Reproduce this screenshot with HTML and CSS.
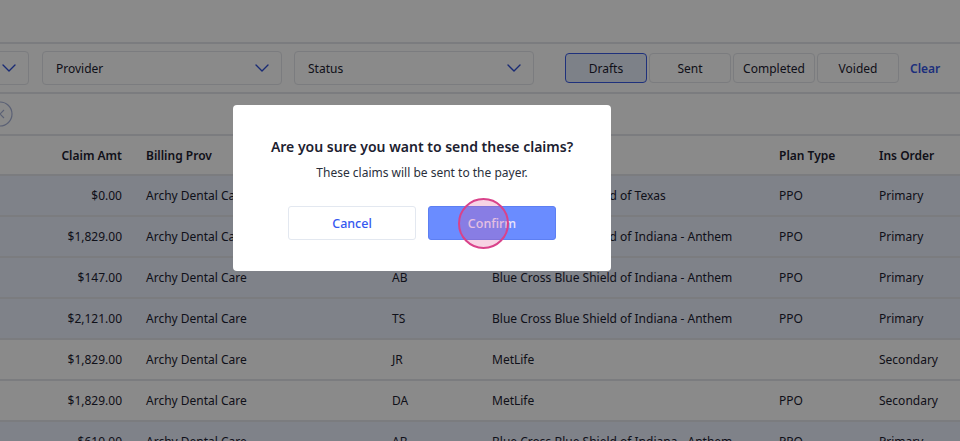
FILE: index.html
```html
<!DOCTYPE html>
<html lang="en">
<head>
<meta charset="utf-8">
<title>Claims</title>
<link rel="stylesheet" href="styles.css">
</head>
<body>
<div class="page">
  <div class="topbar"></div>

  <div class="filters">
    <div class="select select-cut">
      <span class="select-label"></span>
      <svg class="chevron" viewBox="0 0 14 8"><path d="M1 1l6 6 6-6"/></svg>
    </div>
    <div class="select">
      <span class="select-label">Provider</span>
      <svg class="chevron" viewBox="0 0 14 8"><path d="M1 1l6 6 6-6"/></svg>
    </div>
    <div class="select">
      <span class="select-label">Status</span>
      <svg class="chevron" viewBox="0 0 14 8"><path d="M1 1l6 6 6-6"/></svg>
    </div>
    <div class="tabs">
      <button class="tab tab-active">Drafts</button>
      <button class="tab">Sent</button>
      <button class="tab">Completed</button>
      <button class="tab">Voided</button>
    </div>
    <a class="clear">Clear</a>
  </div>

  <div class="chips">
    <span class="chip-close">
      <svg viewBox="0 0 26 26"><circle cx="13" cy="13" r="12"/><path d="M9 9l8 8M17 9l-8 8"/></svg>
    </span>
  </div>

  <div class="table">
    <div class="row head">
      <div class="cell num">Claim Amt</div>
      <div class="cell">Billing Prov</div>
      <div class="cell">Patient</div>
      <div class="cell">Payer</div>
      <div class="cell">Plan Type</div>
      <div class="cell">Ins Order</div>
    </div>
    <div class="row selected">
      <div class="cell num">$0.00</div>
      <div class="cell">Archy Dental Care</div>
      <div class="cell">MK</div>
      <div class="cell">Blue Cross Blue Shield of Texas</div>
      <div class="cell">PPO</div>
      <div class="cell">Primary</div>
    </div>
    <div class="row selected">
      <div class="cell num">$1,829.00</div>
      <div class="cell">Archy Dental Care</div>
      <div class="cell">JR</div>
      <div class="cell">Blue Cross Blue Shield of Indiana - Anthem</div>
      <div class="cell">PPO</div>
      <div class="cell">Primary</div>
    </div>
    <div class="row selected">
      <div class="cell num">$147.00</div>
      <div class="cell">Archy Dental Care</div>
      <div class="cell">AB</div>
      <div class="cell">Blue Cross Blue Shield of Indiana - Anthem</div>
      <div class="cell">PPO</div>
      <div class="cell">Primary</div>
    </div>
    <div class="row selected">
      <div class="cell num">$2,121.00</div>
      <div class="cell">Archy Dental Care</div>
      <div class="cell">TS</div>
      <div class="cell">Blue Cross Blue Shield of Indiana - Anthem</div>
      <div class="cell">PPO</div>
      <div class="cell">Primary</div>
    </div>
    <div class="row">
      <div class="cell num">$1,829.00</div>
      <div class="cell">Archy Dental Care</div>
      <div class="cell">JR</div>
      <div class="cell">MetLife</div>
      <div class="cell"></div>
      <div class="cell">Secondary</div>
    </div>
    <div class="row">
      <div class="cell num">$1,829.00</div>
      <div class="cell">Archy Dental Care</div>
      <div class="cell">DA</div>
      <div class="cell">MetLife</div>
      <div class="cell">PPO</div>
      <div class="cell">Secondary</div>
    </div>
    <div class="row selected">
      <div class="cell num">$610.00</div>
      <div class="cell">Archy Dental Care</div>
      <div class="cell">AB</div>
      <div class="cell">Blue Cross Blue Shield of Indiana - Anthem</div>
      <div class="cell">PPO</div>
      <div class="cell">Primary</div>
    </div>
  </div>
</div>

<div class="backdrop"></div>

<div class="dialog" role="dialog">
  <h2 class="dialog-title">Are you sure you want to send these claims?</h2>
  <p class="dialog-text">These claims will be sent to the payer.</p>
  <div class="dialog-actions">
    <button class="btn btn-secondary">Cancel</button>
    <button class="btn btn-primary">Confirm</button>
  </div>
</div>

<span class="tap"></span>
</body>
</html>
```

FILE: styles.css
```css
* { box-sizing: border-box; }

html, body {
  margin: 0;
  height: 100%;
  overflow: hidden;
  background: #fff;
}

body {
  font-family: "Noto Sans", "Open Sans", sans-serif;
  font-size: 12px;
  color: #1c2130;
}

/* ---------- page ---------- */
.topbar {
  height: 44px;
  border-bottom: 2px solid #e4e6ea;
}

.filters {
  height: 50px;
  display: flex;
  align-items: center;
  border-bottom: 2px solid #e4e6ea;
}

.select {
  width: 240px;
  height: 34px;
  margin-left: 12px;
  padding: 0 12px 0 13px;
  display: flex;
  align-items: center;
  justify-content: space-between;
  border: 1px solid #e3e5ea;
  border-radius: 4px;
  font-size: 12px;
}

.select-cut {
  width: 60px;
  margin-left: -31px;
}

.select-cut + .select {
  margin-left: 13px;
}

.chevron {
  width: 14px;
  height: 8px;
  fill: none;
  stroke: #2f4fd6;
  stroke-width: 1.4;
  stroke-linecap: round;
  stroke-linejoin: round;
}

.tabs {
  display: flex;
  gap: 2px;
  margin-left: 31px;
}

.tab {
  width: 82px;
  height: 30px;
  border: 1px solid #e3e5ea;
  border-radius: 4px;
  background: #fff;
  font: inherit;
  font-size: 12px;
  color: #1c2130;
  padding: 0;
}

.tab-active {
  border-color: #3a5ce6;
  background: #e8eefb;
}

.clear {
  margin-left: 11px;
  font-weight: 600;
  color: #3556e6;
}

.chips {
  height: 42px;
  display: flex;
  align-items: center;
  border-bottom: 2px solid #e4e6ea;
}

.chip-close {
  display: block;
  width: 26px;
  height: 26px;
  margin-left: -13px;
}

.chip-close svg {
  width: 26px;
  height: 26px;
  fill: none;
  stroke: #a8b3d8;
  stroke-width: 1.2;
}

/* ---------- table ---------- */
.row {
  display: grid;
  grid-template-columns: 134px 246px 100px 287px 100px 93px;
  height: 41px;
  align-items: center;
  border-bottom: 2px solid #e4e6ea;
}

.row.head {
  height: 40px;
  font-weight: 600;
}

.row.selected {
  background: #eaf0fe;
}

.cell {
  padding: 0 12px;
  white-space: nowrap;
  overflow: hidden;
}

.cell.num {
  text-align: right;
}

/* ---------- modal ---------- */
.backdrop {
  position: fixed;
  inset: 0;
  background: rgba(0, 0, 0, 0.46);
}

.dialog {
  position: absolute;
  left: 233px;
  top: 105px;
  width: 378px;
  height: 166px;
  padding: 32px 0 0;
  background: #fff;
  border-radius: 4px;
  text-align: center;
}

.dialog-title {
  margin: 0;
  font-size: 14px;
  line-height: 20px;
  font-weight: 600;
  color: #1c2130;
}

.dialog-text {
  margin: 7px 0 0;
  font-size: 12px;
  line-height: 18px;
  color: #2a2f3b;
}

.dialog-actions {
  display: flex;
  justify-content: center;
  gap: 12px;
  margin-top: 24px;
}

.btn {
  width: 128px;
  height: 34px;
  border-radius: 3px;
  font: inherit;
  font-size: 12.5px;
  font-weight: 500;
  padding: 0;
}

.btn-secondary {
  background: #fff;
  border: 1px solid #e3e8f0;
  color: #3558f0;
}

.btn-primary {
  background: #6a8cff;
  border: 1px solid #5d7ff2;
  color: #e8e4fb;
}

/* touch indicator */
.tap {
  position: absolute;
  left: 458px;
  top: 198px;
  width: 51px;
  height: 51px;
  border-radius: 50%;
  border: 2px solid #d9428a;
  background: rgba(224, 86, 150, 0.26);
}
```
